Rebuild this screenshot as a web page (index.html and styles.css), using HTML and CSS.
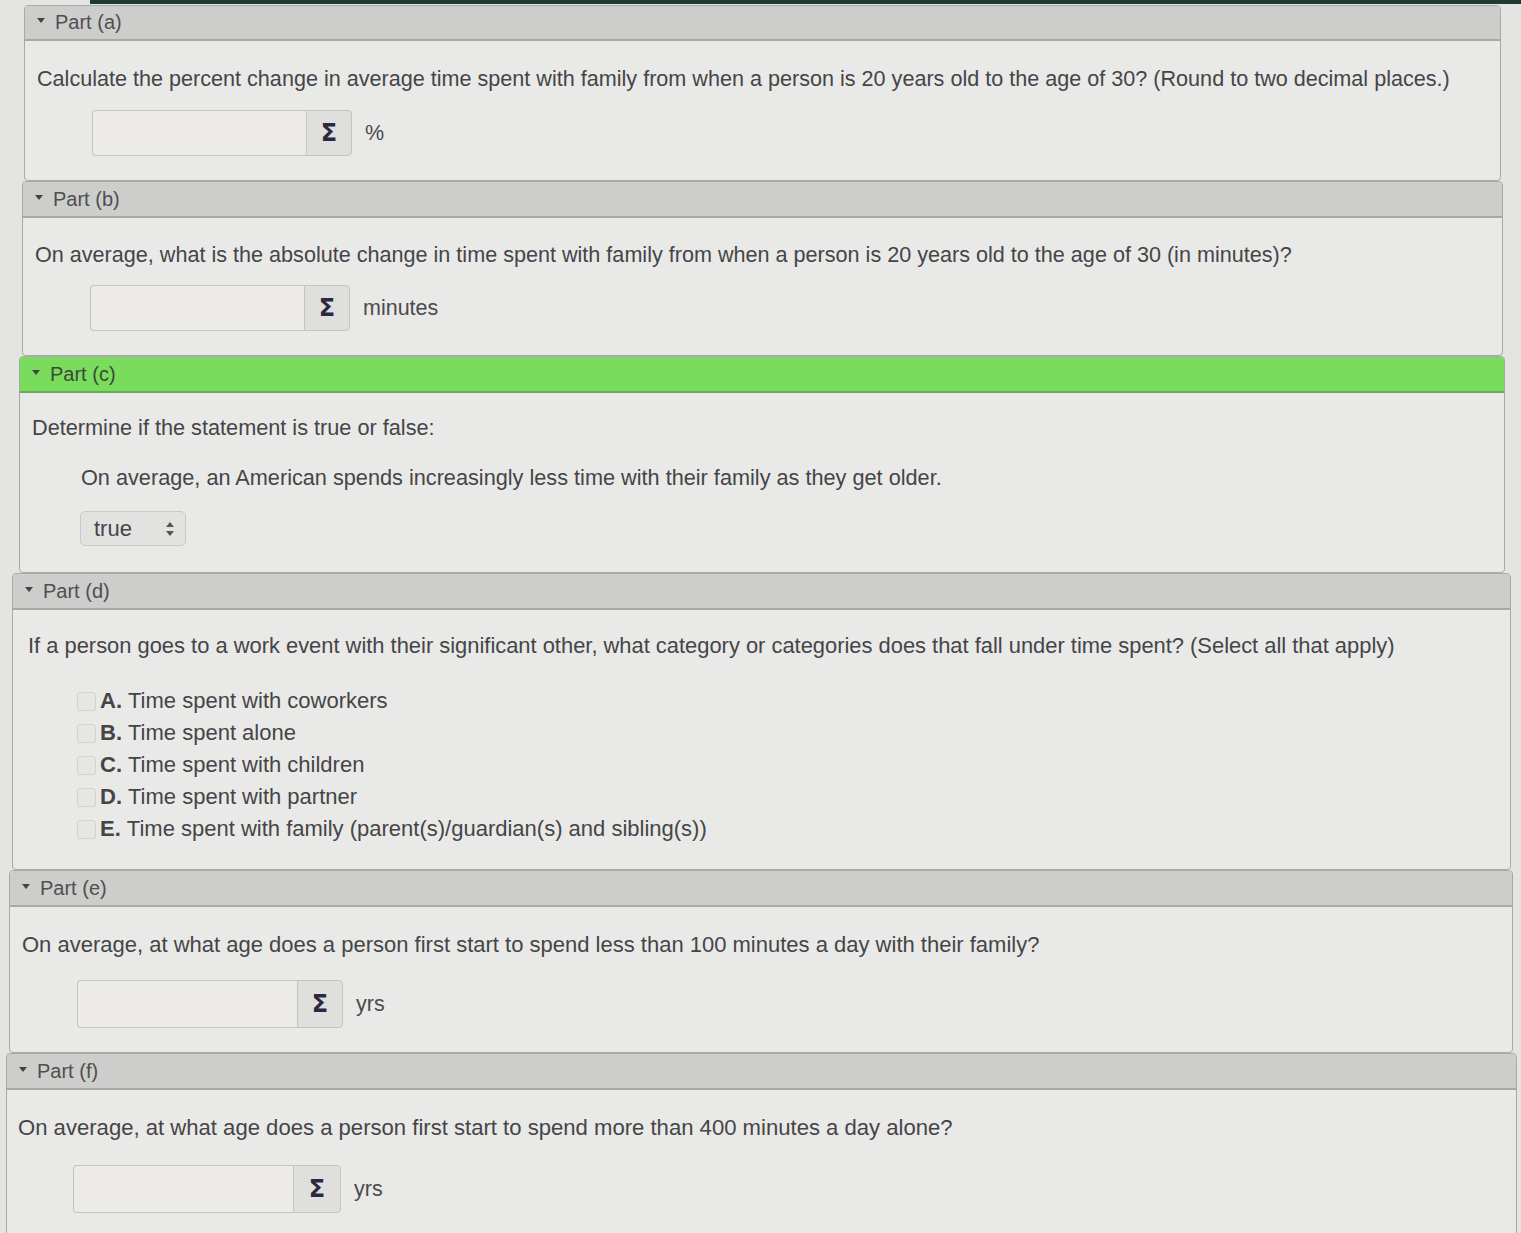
FILE: index.html
```html
<!DOCTYPE html>
<html>
<head>
<meta charset="utf-8">
<link rel="stylesheet" href="styles.css">
</head>
<body>
<div class="topband"></div>
<div class="page">

  <section class="part part-a">
    <div class="part-head"><span class="tri"></span>Part (a)</div>
    <div class="part-body">
      <p class="q">Calculate the percent change in average time spent with family from when a person is 20 years old to the age of 30? (Round to two decimal places.)</p>
      <div class="answer ans-a">
        <span class="field"></span><span class="sigma">Σ</span><span class="unit">%</span>
      </div>
    </div>
  </section>

  <section class="part part-b">
    <div class="part-head"><span class="tri"></span>Part (b)</div>
    <div class="part-body">
      <p class="q">On average, what is the absolute change in time spent with family from when a person is 20 years old to the age of 30 (in minutes)?</p>
      <div class="answer ans-b">
        <span class="field"></span><span class="sigma">Σ</span><span class="unit">minutes</span>
      </div>
    </div>
  </section>

  <section class="part part-c">
    <div class="part-head head-green"><span class="tri"></span>Part (c)</div>
    <div class="part-body">
      <p class="q">Determine if the statement is true or false:</p>
      <p class="stmt">On average, an American spends increasingly less time with their family as they get older.</p>
      <div class="select">
        <span class="sel-val">true</span>
        <svg class="sel-arrows" width="10" height="16" viewBox="0 0 10 16"><path d="M5 1 L9 6 H1 Z M5 15 L9 10 H1 Z" fill="#555"/></svg>
      </div>
    </div>
  </section>

  <section class="part part-d">
    <div class="part-head"><span class="tri"></span>Part (d)</div>
    <div class="part-body">
      <p class="q">If a person goes to a work event with their significant other, what category or categories does that fall under time spent? (Select all that apply)</p>
      <ul class="choices">
        <li><span class="cb"></span><b>A.</b> Time spent with coworkers</li>
        <li><span class="cb"></span><b>B.</b> Time spent alone</li>
        <li><span class="cb"></span><b>C.</b> Time spent with children</li>
        <li><span class="cb"></span><b>D.</b> Time spent with partner</li>
        <li><span class="cb"></span><b>E.</b> Time spent with family (parent(s)/guardian(s) and sibling(s))</li>
      </ul>
    </div>
  </section>

  <section class="part part-e">
    <div class="part-head"><span class="tri"></span>Part (e)</div>
    <div class="part-body">
      <p class="q">On average, at what age does a person first start to spend less than 100 minutes a day with their family?</p>
      <div class="answer ans-e">
        <span class="field"></span><span class="sigma">Σ</span><span class="unit">yrs</span>
      </div>
    </div>
  </section>

  <section class="part part-f">
    <div class="part-head"><span class="tri"></span>Part (f)</div>
    <div class="part-body">
      <p class="q">On average, at what age does a person first start to spend more than 400 minutes a day alone?</p>
      <div class="answer ans-f">
        <span class="field"></span><span class="sigma">Σ</span><span class="unit">yrs</span>
      </div>
    </div>
  </section>

</div>
</body>
</html>
```

FILE: styles.css
```css
html, body {
  margin: 0;
  padding: 0;
}
body {
  background: #e4e4e2;
  font-family: "Liberation Sans", Arial, sans-serif;
  color: #454548;
  width: 1521px;
  height: 1233px;
  overflow: hidden;
}
.topband {
  height: 4px;
  margin-left: 90px;
  background: #1e3b31;
}
.page {
  display: flex;
  flex-direction: column;
  padding-top: 1px;
}
.part {
  border: 1px solid #a9a9a7;
  border-radius: 4px;
  background: #e9e9e7;
  margin-bottom: 2px;
  overflow: hidden;
}
.part-head {
  height: 34px;
  display: flex;
  align-items: center;
  background: #cdcdcb;
  border-bottom: 2px solid #a8a8a6;
  font-size: 20px;
  color: #4f4f52;
  padding-left: 12px;
}
.head-green {
  background: #7adc5c;
  border-bottom-color: #6aa85a;
  color: #3b4a3a;
}
.tri {
  width: 0;
  height: 0;
  border-left: 4px solid transparent;
  border-right: 4px solid transparent;
  border-top: 5px solid #444;
  margin-right: 10px;
  margin-top: -4px;
}
.part-body {
  padding: 0 12px;
}
.q {
  margin: 0;
  font-size: 21.6px;
  line-height: 24px;
}
.answer {
  display: flex;
  align-items: center;
}
.field {
  width: 213px;
  height: 44px;
  border: 1px solid #c4c4c2;
  border-right: none;
  border-radius: 4px 0 0 4px;
  background: #ecebea;
}
.sigma {
  width: 44px;
  height: 44px;
  border: 1px solid #c4c4c2;
  border-radius: 0 4px 4px 0;
  background: #dfdfdd;
  display: flex;
  align-items: center;
  justify-content: center;
  font-family: "DejaVu Sans", sans-serif;
  font-weight: bold;
  font-size: 24px;
  color: #2b2840;
}
.unit {
  font-size: 21.5px;
  margin-left: 13px;
  color: #4b4b4e;
}

/* Part a */
.part-a { margin: 0 20px 0 24px; }
.part-a .part-head { height: 33px; }
.part-a .part-body { padding: 26px 12px 24px 12px; }
.part-a .answer { margin: 19px 0 0 55px; }

/* Part b */
.part-b { margin: 0 18px 0 22px; }
.part-b .part-body { padding: 25px 12px 24px 12px; }
.part-b .answer { margin: 18px 0 0 55px; }

/* Part c */
.part-c { margin: 0 16px 0 19px; }
.part-c .part-body { padding: 23px 12px 26px 12px; }
.part-c .q { font-size: 21.7px; }
.stmt {
  margin: 26px 0 0 49px;
  font-size: 21.7px;
  line-height: 24px;
}
.select {
  margin: 21px 0 0 48px;
  width: 106px;
  height: 35px;
  border: 1px solid #c9c9c7;
  border-radius: 5px;
  background: #e2e2e0;
  display: flex;
  align-items: center;
  justify-content: space-between;
  padding: 0 10px 0 13px;
  box-sizing: border-box;
  font-size: 22px;
}

/* Part d */
.part-d { margin: 0 10px 0 12px; }
.part-d .part-body { padding: 24px 15px 24px 15px; }
.part-d .q { font-size: 21.9px; }
.choices {
  list-style: none;
  margin: 27px 0 0 49px;
  padding: 0;
}
.choices li {
  display: flex;
  align-items: center;
  height: 32px;
  font-size: 22px;
}
.choices b {
  font-weight: bold;
  margin-right: 6px;
}
.cb {
  width: 17px;
  height: 17px;
  border: 1px solid #d2d2d0;
  border-radius: 3px;
  background: #e6e6e4;
  margin-right: 4px;
}

/* Part e */
.part-e { margin: 0 8px 0 9px; }
.part-e .part-body { padding: 26px 12px 24px 12px; }
.part-e .q { font-size: 22px; }
.part-e .answer { margin: 23px 0 0 55px; }
.part-e .field { width: 219px; height: 46px; }
.part-e .sigma { height: 46px; }

/* Part f */
.part-f { margin: 0 4px 0 6px; }
.part-f .part-body { padding: 26px 12px 40px 11px; }
.part-f .q { font-size: 22.1px; }
.part-f .answer { margin: 25px 0 0 55px; }
.part-f .field { width: 219px; height: 46px; }
.part-f .sigma { height: 46px; width: 46px; }
```
